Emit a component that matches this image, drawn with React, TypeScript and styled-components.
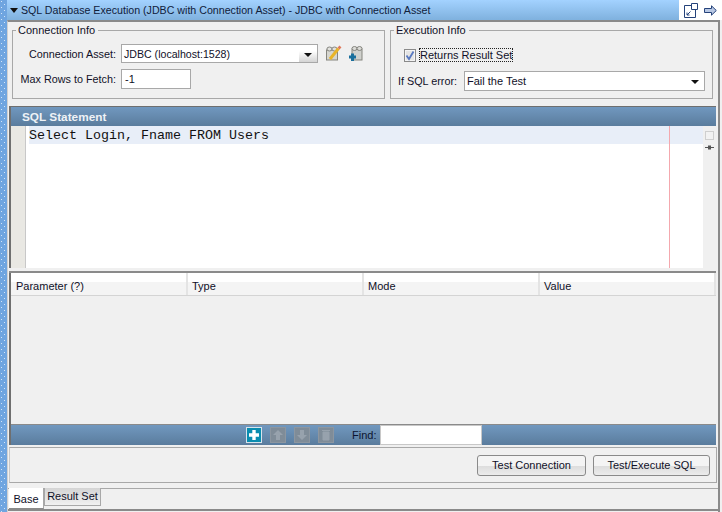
import React from "react";
import styled, { createGlobalStyle } from "styled-components";

const Global = createGlobalStyle`
  html, body { margin: 0; padding: 0; background: #f0f0f0; }
  * { box-sizing: border-box; }
  #root { width: 722px; height: 512px; overflow: hidden; }
`;

const Page = styled.div`
  display: flex;
  width: 722px;
  height: 512px;
  overflow: hidden;
  font-family: "Liberation Sans", "Noto Sans", sans-serif;
  font-size: 11px;
  color: #101028;
  background: #f0f0f0;
`;
const Strip = styled.div`
  width: 7px;
  flex: none;
  background-color: #6fa5e0;
  background-image: radial-gradient(circle at 1.5px 1.5px, #d4e6f8 0.6px, transparent 0.8px),
    radial-gradient(circle at 4.5px 4.5px, #d4e6f8 0.6px, transparent 0.8px);
  background-size: 6px 6px;
`;
const Content = styled.div`
  flex: 1;
  display: flex;
  flex-direction: column;
  min-width: 0;
`;
const TitleRow = styled.div`
  height: 20px;
  flex: none;
  display: flex;
  background: #fff;
`;
const TitleBar = styled.div`
  flex: 1;
  display: flex;
  align-items: center;
  gap: 3px;
  padding-left: 3px;
  background: linear-gradient(#a3d2ff, #7fb1de);
  font-size: 10.65px;
  color: #10203a;
  white-space: nowrap;
`;
const Caret = styled.span`
  width: 0;
  height: 0;
  border-left: 4px solid transparent;
  border-right: 4px solid transparent;
  border-top: 5px solid #111;
  margin-top: 1px;
`;
const TitleIcons = styled.div`
  width: 43px;
  flex: none;
  display: flex;
  align-items: center;
  gap: 6px;
  padding-left: 5px;
  background: #fff;
`;
const Frame = styled.div`
  flex: 1;
  display: flex;
  flex-direction: column;
  border-top: 2px solid #8a8a8a;
  border-left: 1px solid #d0d0d0;
  border-right: 2px solid #8a8a8a;
  margin-right: 2px;
  min-height: 0;
  background: #f0f0f0;
`;
const InfoRow = styled.div`
  height: 84px;
  flex: none;
  display: flex;
  gap: 5px;
  padding: 1px 4px 0 4px;
`;
const Group = styled.fieldset<{ $w: number }>`
  width: ${(p) => p.$w}px;
  height: 76px;
  flex: none;
  margin: 0;
  padding: 0;
  border: 1px solid #a8a8a8;
`;
const GroupLegend = styled.legend`
  font-size: 11px;
  padding: 0 3px 0 2px;
  margin-left: 3px;
  line-height: 14px;
  color: #101028;
`;
const ConnBody = styled.div`
  display: grid;
  grid-template-columns: 103px auto auto auto 1fr;
  grid-auto-rows: 25px;
  column-gap: 5px;
  align-items: center;
  padding-top: 4px;
`;
const RowLabel = styled.label`
  text-align: right;
  white-space: nowrap;
  font-size: 10.8px;
`;
const Combo = styled.div`
  width: 197px;
  height: 19px;
  display: flex;
  border: 1px solid #a8a8a8;
  background: #fff;
  align-items: center;
  padding-left: 2px;
`;
const ComboText = styled.span`
  flex: 1;
  font-size: 10.6px;
`;
const ComboBtn = styled.span`
  width: 18px;
  height: 100%;
  display: flex;
  align-items: center;
  justify-content: center;
  background: linear-gradient(#fff 35%, #d4d4d4);
`;
const SmallCaret = styled.span`
  width: 0;
  height: 0;
  border-left: 4px solid transparent;
  border-right: 4px solid transparent;
  border-top: 4px solid #111;
  margin-top: 2px;
`;
const TextBox = styled.div<{ $w: number }>`
  width: ${(p) => p.$w}px;
  height: 20px;
  border: 1px solid #a8a8a8;
  background: #fff;
  padding-left: 3px;
  line-height: 18px;
  grid-column: 2 / span 4;
`;
const IconSlot = styled.span`
  display: flex;
  margin-left: 2px;
  margin-right: -1px;
`;
const CheckRow = styled.div`
  display: flex;
  align-items: center;
  gap: 3px;
  padding: 11px 0 0 13px;
  height: 25px;
`;
const CheckBox = styled.span`
  width: 12px;
  height: 13px;
  border: 1px solid #8a8a8a;
  background: #e4e4e4;
  display: flex;
  align-items: center;
  justify-content: center;
  box-shadow: inset 0 0 0 1px #f4f4f4;
`;
const CheckLabel = styled.span`
  border: 1px dotted #222;
  width: 94px;
  white-space: nowrap;
  line-height: 12px;
  font-size: 11px;
`;
const ErrRow = styled.div`
  display: flex;
  align-items: center;
  gap: 5px;
  padding: 9px 0 0 7px;
`;
const ErrLabel = styled(RowLabel)`
  width: 61px;
  text-align: left;
`;
const Select = styled.div`
  width: 241px;
  height: 20px;
  border: 1px solid #a8a8a8;
  background: #fff;
  display: flex;
  align-items: center;
  justify-content: space-between;
  padding: 0 5px 0 2px;
`;
const SqlSection = styled.section`
  height: 162px;
  flex: none;
  margin: 0 2px 0 1px;
  border-top: 1px solid #6f6f6f;
  border-left: 2px solid #6f6f6f;
  display: flex;
  flex-direction: column;
`;
const SqlHeader = styled.div`
  height: 19px;
  flex: none;
  background: linear-gradient(#7198bf, #5a7c9d);
  color: #eef2f6;
  font-weight: 700;
  font-size: 11.8px;
  line-height: 20px;
  padding-left: 11px;
`;
const Editor = styled.div`
  flex: 1;
  display: flex;
  background: #fff;
  min-height: 0;
`;
const Gutter = styled.div`
  width: 15px;
  flex: none;
  background: #e9e8e3;
  border-right: 1px solid #c8c8c8;
`;
const Code = styled.div`
  flex: 1;
  padding-left: 3px;
  position: relative;
`;
const CodeLine = styled.div`
  height: 18px;
  background: #e8eef8;
  font-family: "Liberation Mono", monospace;
  font-size: 13.33px;
  line-height: 20px;
  color: #111;
  white-space: pre;
`;
const MarginLine = styled.span`
  position: absolute;
  top: 0;
  bottom: 0;
  left: 643px;
  width: 1px;
  background: #f4a8ae;
`;
const MarkerBar = styled.div`
  width: 13px;
  flex: none;
  background: #f0f0f0;
  display: flex;
  flex-direction: column;
  align-items: center;
  gap: 5px;
  padding-top: 5px;
`;
const FoldBox = styled.span`
  width: 9px;
  height: 9px;
  border: 1px solid #cfcfcf;
  background: #f2f2f2;
`;
const Splitter = styled.div`
  height: 5px;
  flex: none;
  background: #f0f0f0;
  margin: 0 2px 0 1px;
  border-bottom: 2px solid #8a8a8a;
`;
const TableSection = styled.section`
  height: 172px;
  flex: none;
  margin: 0 2px 0 1px;
  border-left: 2px solid #6f6f6f;
  display: flex;
  flex-direction: column;
`;
const TableHead = styled.div`
  height: 23px;
  flex: none;
  display: grid;
  grid-template-columns: 177px 176px 176px 1fr;
  background: linear-gradient(#fff 0 9px, #f4f4f4 9px);
  border-bottom: 1px solid #d4d4d4;
`;
const HeadCell = styled.div`
  padding: 6px 0 0 4px;
  border-right: 2px solid #e4e4e4;
  font-size: 11px;
  line-height: 14px;
  &:first-child {
    padding-left: 5px;
  }
`;
const TableBody = styled.div`
  flex: 1;
  background: #f0f0f0;
`;
const TableBar = styled.div`
  height: 21px;
  flex: none;
  border-top: 1px solid #8a8a8a;
  background: linear-gradient(#7198bf, #5a7c9d);
  display: flex;
  align-items: center;
  padding-left: 235px;
`;
const ToolBtn = styled.span<{ $off?: boolean }>`
  width: 16px;
  height: 16px;
  margin-right: 8px;
  display: flex;
  align-items: center;
  justify-content: center;
  border: 1px solid ${(p) => (p.$off ? "#8c96a0" : "#d8e4ec")};
  background: ${(p) => (p.$off ? "#7f8c98" : "#0a8db0")};
`;
const FindLabel = styled.span`
  margin-left: 10px;
  width: 28px;
  font-size: 11px;
  color: #0c1430;
`;
const FindBox = styled.div`
  width: 102px;
  height: 20px;
  background: #fff;
  border: 1px solid #c8c8c8;
`;
const ActionPanel = styled.div`
  height: 36px;
  flex: none;
  margin: 2px 1px 0 1px;
  border: 1px solid #a8a8a8;
  border-left-color: #c8c8c8;
  display: flex;
  justify-content: flex-end;
  align-items: center;
  gap: 7px;
  padding-right: 6px;
`;
const Btn = styled.button<{ $w: number }>`
  width: ${(p) => p.$w}px;
  height: 21px;
  padding: 0;
  font: inherit;
  font-size: 11px;
  color: #101028;
  border: 1px solid #8a8a8a;
  border-radius: 3px;
  background: linear-gradient(#f4f4f4 0 50%, #dcdcdc 50%, #ececec);
`;
const Tabs = styled.div`
  height: 23px;
  flex: none;
  display: flex;
  align-items: flex-start;
  padding-left: 1px;
  margin-top: 5px;
  border-bottom: 2px solid #8a8a8a;
  background: linear-gradient(#a8a8a8 0 1px, transparent 1px);
`;
const BaseTab = styled.div`
  width: 35px;
  height: 21px;
  background: #fff;
  border-right: 1px solid #a8a8a8;
  border-bottom: 1px solid #8a8a8a;
  text-align: center;
  line-height: 22px;
  font-size: 11px;
`;
const SetTab = styled.div`
  width: 57px;
  height: 18px;
  border: 1px solid #a8a8a8;
  border-top: 0;
  background: linear-gradient(#d4d4d4, #f0f0f0);
  text-align: center;
  line-height: 17px;
  font-size: 11px;
`;

const EditAssetIcon = () => (
  <svg width="17" height="17" viewBox="0 0 17 17">
    <rect x="1.5" y="5" width="11" height="10" fill="#d6d6d0" stroke="#85857f" />
    <ellipse cx="4.5" cy="4" rx="2.6" ry="2" fill="#e2e2de" stroke="#85857f" />
    <ellipse cx="9.5" cy="4" rx="2.6" ry="2" fill="#e2e2de" stroke="#85857f" />
    <path d="M5 14 L13.5 3.5" stroke="#e8b428" strokeWidth="3" />
    <path d="M13.5 3.5 L15.5 1.5" stroke="#e0785a" strokeWidth="2.6" />
  </svg>
);
const AddAssetIcon = () => (
  <svg width="16" height="17" viewBox="0 0 16 17">
    <rect x="4" y="4" width="10" height="11" fill="#d0d1cd" stroke="#85857f" />
    <ellipse cx="6.5" cy="3.5" rx="2.5" ry="2" fill="#dcdcd8" stroke="#85857f" />
    <ellipse cx="11.5" cy="3.5" rx="2.5" ry="2" fill="#dcdcd8" stroke="#85857f" />
    <path d="M1 12 H8 M4.5 8.5 V16" stroke="#1a6f9c" strokeWidth="3" />
  </svg>
);
const DetachIcon = () => (
  <svg width="14" height="15" viewBox="0 0 14 15" fill="none">
    <path d="M0.5 2.5 H11.5 V14.5 H0.5 Z" fill="#fff" stroke="#25427a" />
    <path d="M7.5 0.5 H13.5 V6.5 H7.5 Z" fill="#fff" stroke="#25427a" />
    <path d="M3 12 L6.5 8.5 M3 9.5 V12 H5.5" stroke="#25427a" />
  </svg>
);
const ArrowIcon = () => (
  <svg width="13" height="11" viewBox="0 0 13 11">
    <path d="M0.5 3.5 H7.5 V0.8 L12.3 5.5 L7.5 10.2 V7.5 H0.5 Z" fill="#b8c8e4" stroke="#25427a" />
  </svg>
);
const Check = () => (
  <svg width="10" height="11" viewBox="0 0 10 11">
    <path d="M1.5 5.5 L4 9 L8.5 1.5" fill="none" stroke="#5878c0" strokeWidth="1.8" />
  </svg>
);
const Marker = () => (
  <svg width="9" height="5" viewBox="0 0 9 5">
    <path d="M0 2.5 H9" stroke="#555" />
    <rect x="3" y="0.5" width="3" height="4" fill="#555" />
  </svg>
);
const Plus = () => (
  <svg width="12" height="12" viewBox="0 0 12 12">
    <path d="M6 1 V11 M1 6 H11" stroke="#fff" strokeWidth="3.4" />
  </svg>
);
const UpIcon = () => (
  <svg width="12" height="12" viewBox="0 0 12 12">
    <path d="M6 1 L11 6 H8 V11 H4 V6 H1 Z" fill="#97a2ad" />
  </svg>
);
const DownIcon = () => (
  <svg width="12" height="12" viewBox="0 0 12 12">
    <path d="M6 11 L11 6 H8 V1 H4 V6 H1 Z" fill="#97a2ad" />
  </svg>
);
const TrashIcon = () => (
  <svg width="10" height="12" viewBox="0 0 10 12">
    <path d="M1 1.5 H9 M2 3 H8 V11 H2 Z" fill="#97a2ad" stroke="#97a2ad" />
  </svg>
);

export default function App() {
  return (
    <Page>
      <Global />
      <Strip />
      <Content>
        <TitleRow>
          <TitleBar>
            <Caret />
            SQL Database Execution (JDBC with Connection Asset) - JDBC with Connection Asset
          </TitleBar>
          <TitleIcons>
            <DetachIcon />
            <ArrowIcon />
          </TitleIcons>
        </TitleRow>
        <Frame>
          <InfoRow>
            <Group $w={373}>
              <GroupLegend>Connection Info</GroupLegend>
              <ConnBody>
                <RowLabel>Connection Asset:</RowLabel>
                <Combo>
                  <ComboText>JDBC (localhost:1528)</ComboText>
                  <ComboBtn>
                    <SmallCaret />
                  </ComboBtn>
                </Combo>
                <IconSlot>
                  <EditAssetIcon />
                </IconSlot>
                <IconSlot>
                  <AddAssetIcon />
                </IconSlot>
                <span />
                <RowLabel>Max Rows to Fetch:</RowLabel>
                <TextBox $w={70}>-1</TextBox>
              </ConnBody>
            </Group>
            <Group $w={323}>
              <GroupLegend>Execution Info</GroupLegend>
              <CheckRow>
                <CheckBox>
                  <Check />
                </CheckBox>
                <CheckLabel>Returns Result Set</CheckLabel>
              </CheckRow>
              <ErrRow>
                <ErrLabel>If SQL error:</ErrLabel>
                <Select>
                  Fail the Test
                  <SmallCaret />
                </Select>
              </ErrRow>
            </Group>
          </InfoRow>
          <SqlSection>
            <SqlHeader>SQL Statement</SqlHeader>
            <Editor>
              <Gutter />
              <Code>
                <CodeLine>Select Login, Fname FROM Users</CodeLine>
                <MarginLine />
              </Code>
              <MarkerBar>
                <FoldBox />
                <Marker />
              </MarkerBar>
            </Editor>
          </SqlSection>
          <Splitter />
          <TableSection>
            <TableHead>
              <HeadCell>Parameter (?)</HeadCell>
              <HeadCell>Type</HeadCell>
              <HeadCell>Mode</HeadCell>
              <HeadCell>Value</HeadCell>
            </TableHead>
            <TableBody />
            <TableBar>
              <ToolBtn>
                <Plus />
              </ToolBtn>
              <ToolBtn $off>
                <UpIcon />
              </ToolBtn>
              <ToolBtn $off>
                <DownIcon />
              </ToolBtn>
              <ToolBtn $off>
                <TrashIcon />
              </ToolBtn>
              <FindLabel>Find:</FindLabel>
              <FindBox />
            </TableBar>
          </TableSection>
          <ActionPanel>
            <Btn $w={109}>Test Connection</Btn>
            <Btn $w={117}>Test/Execute SQL</Btn>
          </ActionPanel>
          <Tabs>
            <BaseTab>Base</BaseTab>
            <SetTab>Result Set</SetTab>
          </Tabs>
        </Frame>
      </Content>
    </Page>
  );
}
